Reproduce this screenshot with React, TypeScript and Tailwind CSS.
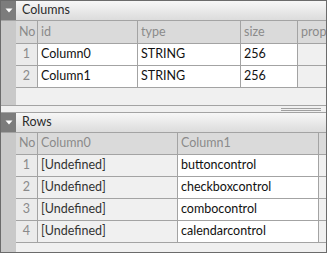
const font = { fontFamily: '"Segoe UI", Lato, "Noto Sans", sans-serif' };

type Col = { label: string; w: string };

function PanelTitle({ title }: { title: string }) {
  return (
    <div className="flex h-[20px] shrink-0 border-b border-[#a3a3a3]">
      <div className="flex w-[15px] items-center justify-center bg-[#7c7c7c]">
        <svg width="8" height="5" viewBox="0 0 8 5">
          <path d="M0.5 0.5 H7.5 L4 4.5 Z" fill="#ffffff" />
        </svg>
      </div>
      <div className="flex flex-1 items-center bg-gradient-to-b from-[#f7f7f7] to-[#dcdcdc] pl-[6px] text-[12.5px] text-[#2b2b2b]">
        {title}
      </div>
    </div>
  );
}

function Grid({
  cols,
  rows,
  headerH,
}: {
  cols: Col[];
  rows: { no: number; cells: { text: string; blank?: boolean }[] }[];
  headerH: string;
}) {
  return (
    <div className="flex flex-1 flex-col">
      <div className={`flex ${headerH} bg-[#dadada] text-[12.5px] text-[#8a8a8a]`}>
        <div className="flex w-[22px] shrink-0 items-center border-r border-b border-[#a3a3a3] pl-[3px]">
          No
        </div>
        {cols.map((c, i) => (
          <div
            key={c.label + i}
            className={`flex ${c.w} items-center overflow-hidden whitespace-nowrap border-b border-[#a3a3a3] pl-[3px] ${
              c.w === "flex-1" ? "" : "shrink-0 border-r"
            }`}
          >
            {c.label}
          </div>
        ))}
      </div>
      {rows.map((r) => (
        <div key={r.no} className="flex h-[22px] text-[12.5px]">
          <div className="flex w-[22px] shrink-0 items-center justify-end border-r border-b border-[#a3a3a3] bg-[#ebebeb] pr-[7px] text-[#8a8a8a]">
            {r.no}
          </div>
          {cols.map((c, i) => {
            const cell = r.cells[i];
            const white = cell && cell.text && !cell.blank;
            return (
              <div
                key={i}
                className={`flex ${c.w} items-center overflow-hidden whitespace-nowrap border-b border-[#a3a3a3] pl-[3px] ${
                  c.w === "flex-1" ? "" : "shrink-0 border-r"
                } ${white ? "bg-white text-[#111]" : "bg-[#f0f0f0] text-[#333]"}`}
              >
                {cell ? cell.text : ""}
              </div>
            );
          })}
        </div>
      ))}
    </div>
  );
}

export default function App() {
  const columnsCols: Col[] = [
    { label: "id", w: "w-[100px]" },
    { label: "type", w: "w-[103px]" },
    { label: "size", w: "w-[57px]" },
    { label: "properties", w: "flex-1" },
  ];
  const columnsRows = [
    { no: 1, cells: [{ text: "Column0" }, { text: "STRING" }, { text: "256" }, { text: "" }] },
    { no: 2, cells: [{ text: "Column1" }, { text: "STRING" }, { text: "256" }, { text: "" }] },
  ];

  const rowsCols: Col[] = [
    { label: "Column0", w: "w-[140px]" },
    { label: "Column1", w: "w-[141px]" },
    { label: "", w: "flex-1" },
  ];
  const rowsRows = ["buttoncontrol", "checkboxcontrol", "combocontrol", "calendarcontrol"].map(
    (v, i) => ({
      no: i + 1,
      cells: [{ text: "[Undefined]", blank: true }, { text: v }, { text: "" }],
    })
  );

  return (
    <div
      className="flex h-[253px] w-[327px] flex-col overflow-hidden border border-[#6b6b6b] bg-[#f0f0f0]"
      style={font}
    >
      {/* Columns panel */}
      <div className="flex h-[105px] shrink-0 flex-col border-b border-[#a3a3a3]">
        <PanelTitle title="Columns" />
        <div className="flex flex-1">
          <div className="w-[15px] shrink-0 bg-[#c9c9c9]" />
          <Grid cols={columnsCols} rows={columnsRows} headerH="h-[23px]" />
        </div>
      </div>

      {/* splitter */}
      <div className="flex h-[6px] shrink-0 items-center justify-end pr-[5px]">
        <div className="flex w-[40px] flex-col gap-[1px]">
          <div className="h-px bg-[#a0a0a0]" />
          <div className="h-px bg-[#a0a0a0]" />
        </div>
      </div>

      {/* Rows panel */}
      <div className="flex flex-1 flex-col border-t border-[#a3a3a3]">
        <PanelTitle title="Rows" />
        <div className="flex flex-1">
          <div className="w-[15px] shrink-0 bg-[#c9c9c9]" />
          <Grid cols={rowsCols} rows={rowsRows} headerH="h-[22px]" />
        </div>
      </div>
    </div>
  );
}
